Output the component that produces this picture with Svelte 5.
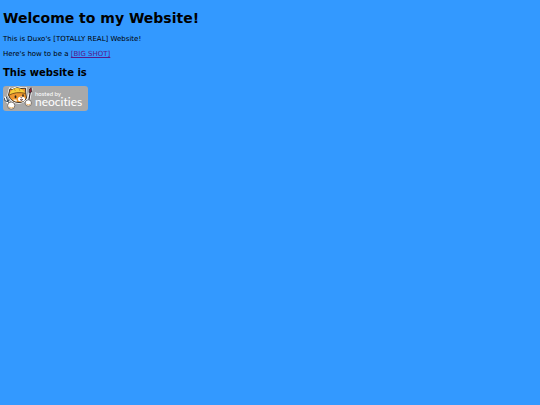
<script lang="ts">
    const title = "Welcome to my Website!";
    const neocities = "https://neocities.org";
</script>

<main>
    <h1>{title}</h1>
    <p>This is Duxo's [TOTALLY REAL] Website!</p>
    <p>Here's how to be a <a href="#bigshot">[BIG SHOT]</a></p>
    <h2>This website is</h2>
    <a class="badge" href={neocities}>
        <svg class="cat" viewBox="0 0 32 25" aria-hidden="true">
            <!-- fork and brush -->
            <g stroke="#fff" stroke-width="3" fill="none" stroke-linecap="round">
                <path d="M2 12 L4 15 L9 20" />
                <path d="M28 3 L25 17" />
            </g>
            <path
                d="M1 11.5 L2.2 15 L5 15.5 L6.5 13 L5.3 10.2 M3.2 10.7 L4.8 15 L8 20"
                stroke="#30455a"
                stroke-width="1"
                fill="none"
            />
            <path d="M27.3 6 L25.5 16" stroke="#352b35" stroke-width="1.3" />
            <path d="M26.2 6.5 L26.6 3 L28.2 1.6 L28.6 6 Z" fill="#8f2434" stroke="#35202a" stroke-width="0.8" />
            <!-- head -->
            <path
                d="M5.5 9 L7 2.8 L9.5 3.5 Q14 0.5 18 2.5 L22.5 2.2 L22.8 7 L23.5 12 Q21 16.5 16 16.5 Q8 16.5 5.5 9 Z"
                fill="#ef972f"
                stroke="#fff"
                stroke-width="2.4"
            />
            <path
                d="M5.5 9 L7 2.8 L9.5 3.5 Q14 0.5 18 2.5 L22.5 2.2 L22.8 7 L23.5 12 Q21 16.5 16 16.5 Q8 16.5 5.5 9 Z"
                fill="#ef972f"
                stroke="#3b3026"
                stroke-width="1"
            />
            <path d="M6.5 8.5 Q8 3 13 2 Q19 1.5 22 7 Q15 5 6.5 8.5 Z" fill="#f6cf3d" />
            <path d="M5.5 9.5 Q13 5 23 7.5" fill="none" stroke="#765017" stroke-width="0.9" />
            <path d="M11 3 L12.5 5 M16 2.5 L17 5" stroke="#bd7b22" stroke-width="0.7" />
            <ellipse cx="18.5" cy="13" rx="3.6" ry="2.5" fill="#fff" />
            <path d="M10 13.5 Q11 16 14 15.5 L13.5 13.5 Z" fill="#fff4dc" />
            <ellipse cx="12.5" cy="10.7" rx="0.9" ry="1.5" fill="#292522" />
            <ellipse cx="20" cy="9.6" rx="0.8" ry="1.3" fill="#292522" />
            <path d="M17 11.4 L19.4 11.2 L18.4 12.6 Z" fill="#683439" />
            <path d="M17 13.4 Q18.5 15.6 20 13.2" fill="#813138" stroke="#3b3026" stroke-width="0.6" />
            <circle cx="8.2" cy="19.6" r="3.6" fill="#fff" stroke="#544b43" stroke-width="0.7" />
            <circle cx="25.3" cy="17" r="3.2" fill="#fff" stroke="#544b43" stroke-width="0.7" />
            <path d="M6 21 Q8 23 10.5 21.3 M23.3 18 Q25 20 27.5 18" fill="none" stroke="#efb565" stroke-width="1" />
        </svg>
        <span class="label">
            <span class="hosted">hosted by</span>
            <span class="name">neocities</span>
        </span>
    </a>
</main>

<style>
    :global(body) {
        background: #3399ff;
    }

    main {
        padding: 10px 3px;
        font-family: Verdana, "DejaVu Sans", sans-serif;
        font-size: 7px;
        line-height: 8px;
        color: #000;
    }

    h1 {
        margin: 0 0 8px;
        font-size: 14px;
        line-height: 17px;
    }

    p {
        margin: 0 0 7px;
    }

    p a {
        color: #551a8b;
    }

    h2 {
        margin: 0 0 6px;
        font-size: 10px;
        line-height: 15px;
    }

    .badge {
        display: flex;
        width: 85px;
        height: 25px;
        border-radius: 3px;
        background: #a9a9a9;
        color: #fff;
        text-decoration: none;
    }

    .cat {
        flex: none;
        width: 32px;
        height: 25px;
    }

    .label {
        display: flex;
        flex-direction: column;
        padding-top: 4px;
        font-family: Lato, "Open Sans", sans-serif;
        font-variant-ligatures: none;
        white-space: nowrap;
    }

    .hosted {
        font-size: 6px;
        line-height: 7px;
    }

    .name {
        font-size: 12px;
        line-height: 10px;
    }
</style>
